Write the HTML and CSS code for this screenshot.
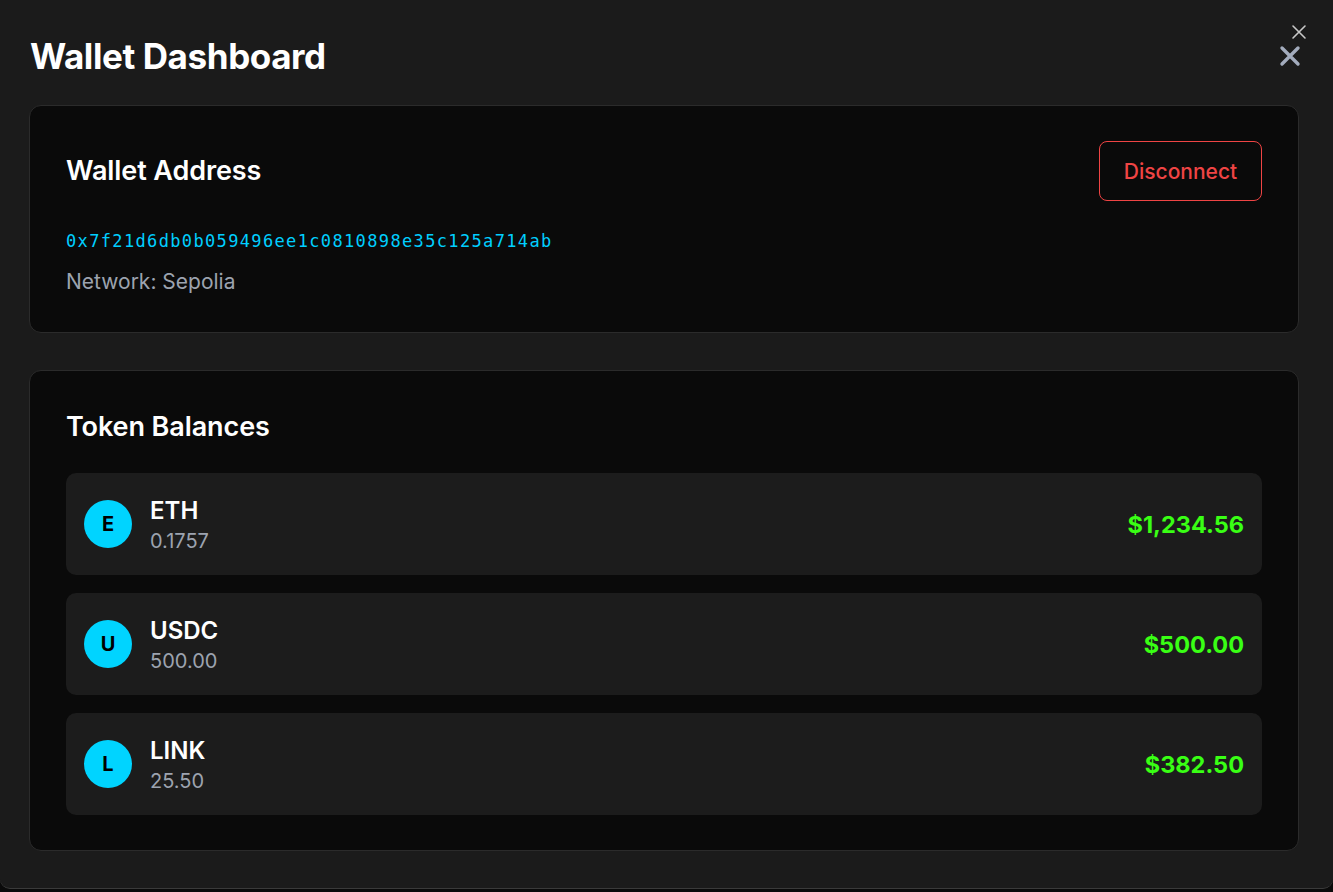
FILE: index.html
```html
<!DOCTYPE html>
<html lang="en">
<head>
<meta charset="utf-8">
<title>Wallet Dashboard</title>
<link rel="stylesheet" href="styles.css">
</head>
<body>
<div class="modal">
  <button class="close-small" aria-label="Close">
    <svg width="16" height="16" viewBox="0 0 16 16"><path d="M2 2L14 14M14 2L2 14" stroke="#c8c8c8" stroke-width="1.6" stroke-linecap="round"/></svg>
  </button>
  <header class="modal-head">
    <h1 class="title">Wallet Dashboard</h1>
    <button class="close-big" aria-label="Close">
      <svg width="22" height="22" viewBox="0 0 22 22"><path d="M3 3L19 19M19 3L3 19" stroke="#a3acbd" stroke-width="3.4" stroke-linecap="round"/></svg>
    </button>
  </header>

  <section class="card">
    <div class="card-row">
      <h2 class="card-title">Wallet Address</h2>
      <button class="btn-disconnect">Disconnect</button>
    </div>
    <div class="address">0x7f21d6db0b059496ee1c0810898e35c125a714ab</div>
    <div class="network">Network: Sepolia</div>
  </section>

  <section class="card tokens">
    <h2 class="card-title">Token Balances</h2>
    <div class="token-list">
      <div class="token">
        <div class="token-left">
          <div class="avatar">E</div>
          <div class="token-info">
            <div class="token-name">ETH</div>
            <div class="token-amount">0.1757</div>
          </div>
        </div>
        <div class="token-value">$1,234.56</div>
      </div>
      <div class="token">
        <div class="token-left">
          <div class="avatar">U</div>
          <div class="token-info">
            <div class="token-name">USDC</div>
            <div class="token-amount">500.00</div>
          </div>
        </div>
        <div class="token-value">$500.00</div>
      </div>
      <div class="token">
        <div class="token-left">
          <div class="avatar">L</div>
          <div class="token-info">
            <div class="token-name">LINK</div>
            <div class="token-amount">25.50</div>
          </div>
        </div>
        <div class="token-value">$382.50</div>
      </div>
    </div>
  </section>
</div>
</body>
</html>
```
FILE: styles.css
```css
* { box-sizing: border-box; }
html, body { margin: 0; padding: 0; }
body {
  background: #0a0a0a;
  font-family: Inter, "Noto Sans", sans-serif;
  color: #fff;
  height: 892px;
  overflow: hidden;
}
.modal {
  position: relative;
  height: 889px;
  background: #1b1b1b;
  border-bottom: 1px solid #3a3a3a;
  border-radius: 0 0 10px 10px;
  padding: 30px 34px 0 29px;
  display: flex;
  flex-direction: column;
}
.close-small {
  position: absolute;
  top: 24px;
  right: 26px;
  background: none;
  border: 0;
  padding: 0;
  width: 16px;
  height: 16px;
  display: flex;
}
.modal-head {
  display: flex;
  justify-content: space-between;
  align-items: center;
  height: 52px;
  margin-bottom: 23px;
}
.title {
  margin: 0 0 0 1px;
  font-size: 35px;
  font-weight: 700;
  letter-spacing: -0.4px;
  line-height: 52px;
}
.close-big {
  background: none;
  border: 0;
  padding: 0;
  display: flex;
  margin-right: -2px;
}
.card {
  background: #0a0a0a;
  border: 1px solid #2b2b2b;
  border-radius: 12px;
  padding: 35px 36px 38px 36px;
}
.card + .card { margin-top: 37px; }
.card-row {
  display: flex;
  justify-content: space-between;
  align-items: center;
  margin-bottom: 28px;
}
.card-title {
  margin: 0;
  font-size: 27px;
  font-weight: 600;
  line-height: 32px;
  letter-spacing: -0.1px;
}
.btn-disconnect {
  height: 60px;
  width: 163px;
  background: transparent;
  border: 1px solid #ef4444;
  border-radius: 8px;
  color: #ef4444;
  font-family: Inter, sans-serif;
  font-size: 21px;
  font-weight: 500;
}
.address {
  font-family: "DejaVu Sans Mono", "Liberation Mono", monospace;
  font-size: 17px;
  letter-spacing: 1.35px;
  color: #00cfff;
  line-height: 24px;
}
.network {
  margin-top: 17px;
  font-size: 21px;
  color: #9ca3af;
  line-height: 24px;
}
.tokens { padding-bottom: 35px; }
.tokens .card-title { margin-bottom: 30px; margin-top: 5px; }
.token-list {
  display: flex;
  flex-direction: column;
  gap: 18px;
}
.token {
  height: 102px;
  background: #1c1c1c;
  border-radius: 10px;
  padding: 0 18px;
  display: flex;
  align-items: center;
  justify-content: space-between;
}
.token-left {
  display: flex;
  align-items: center;
  gap: 18px;
}
.avatar {
  width: 48px;
  height: 48px;
  border-radius: 50%;
  background: #00d4ff;
  color: #000;
  font-weight: 700;
  font-size: 20px;
  display: flex;
  align-items: center;
  justify-content: center;
}
.token-info {
  display: flex;
  flex-direction: column;
  padding-top: 1px;
}
.token-name {
  font-size: 24px;
  font-weight: 600;
  line-height: 32px;
}
.token-amount {
  font-size: 20px;
  color: #9ca3af;
  line-height: 28px;
}
.token-value {
  font-size: 23.5px;
  font-weight: 700;
  color: #39ff14;
}
```
